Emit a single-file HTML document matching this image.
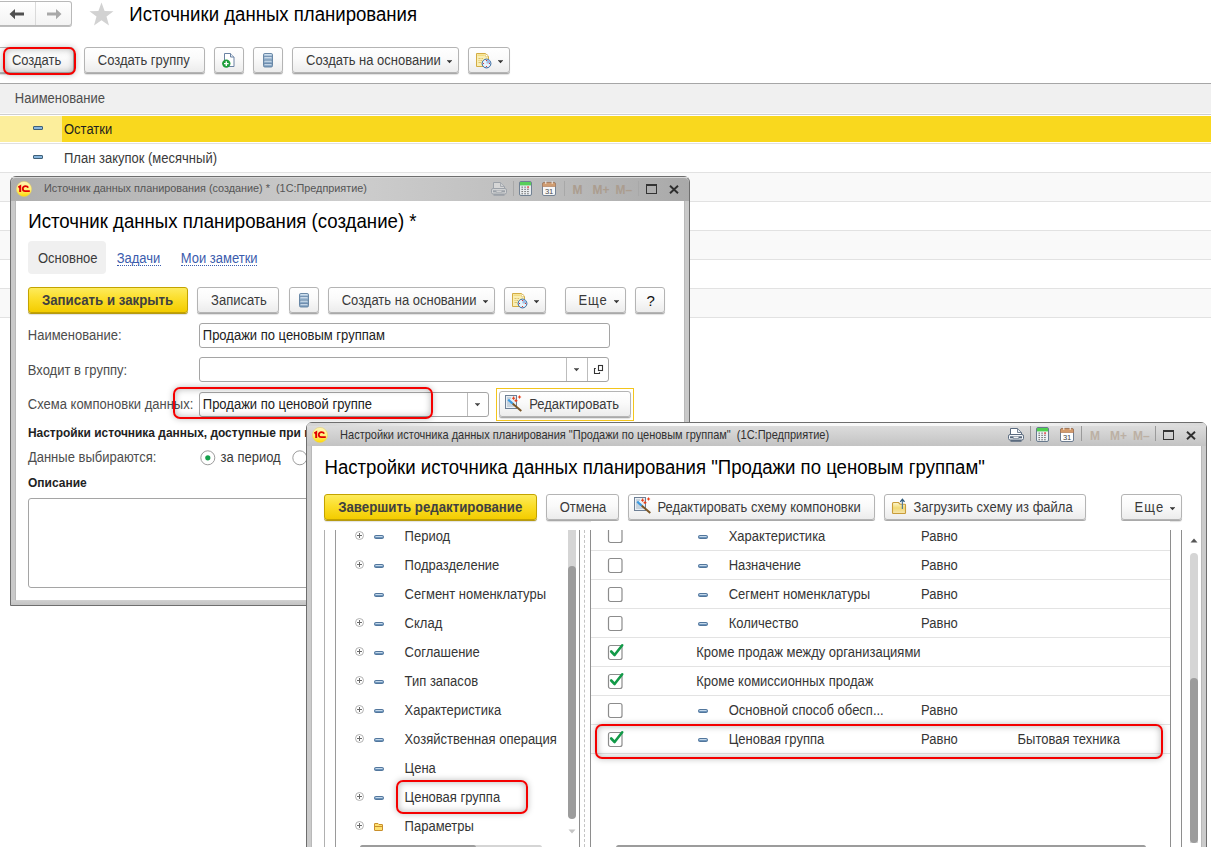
<!DOCTYPE html>
<html><head><meta charset="utf-8"><style>
*{box-sizing:border-box;margin:0;padding:0}
html,body{width:1211px;height:847px;overflow:hidden;background:#fff;font-family:"Liberation Sans",sans-serif;font-size:13px;color:#333}
.a{position:absolute}
.t{position:absolute;white-space:pre}
.btn{position:absolute;border:1px solid #b4b4b4;border-radius:3px;background:linear-gradient(#fff,#fafafa 45%,#ececec);box-shadow:0 1px 0 #a9a9a9,0 2px 1px rgba(0,0,0,.12)}
.ybtn{position:absolute;border:1px solid #c3a300;border-radius:3px;background:linear-gradient(#fdeb5c,#fbde2a 45%,#f3cc00);box-shadow:0 1px 0 #b69a10,0 2px 1px rgba(0,0,0,.12)}
.red{position:absolute;border:2px solid #f40000;border-radius:7px;box-shadow:0 0 6px rgba(0,0,0,.25),inset 0 0 7px rgba(0,0,0,.3)}
.inp{position:absolute;border:1px solid #a5a5a5;border-radius:3px;background:#fff}
</style></head><body>
<div class="a" style="left:0px;top:1px;width:72px;height:25px;border:1px solid #b9b9b9;border-left:none;border-radius:0 3px 3px 0;background:linear-gradient(#fff,#f3f3f3);box-shadow:0 1px 0 #bdbdbd"></div>
<div class="a" style="left:35px;top:2px;width:1px;height:23px;background:#dadada"></div>
<svg class="a" style="left:9px;top:9px" width="16" height="11" viewBox="0 0 16 11"><path d="M0.5 5 L6 0 L6 3.6 L15 3.6 L15 6.6 L6 6.6 L6 10.2 Z" fill="#505050"/></svg>
<svg class="a" style="left:46px;top:9px" width="16" height="11" viewBox="0 0 16 11"><path d="M15.5 5 L10 0 L10 3.6 L1 3.6 L1 6.6 L10 6.6 L10 10.2 Z" fill="#a8a8a8"/></svg>
<svg class="a" style="left:89px;top:2px" width="25" height="24" viewBox="0 0 25 24"><path d="M12.5 0.5 L15.6 9 L24.5 9.2 L17.5 14.6 L20 23.5 L12.5 18.3 L5 23.5 L7.5 14.6 L0.5 9.2 L9.4 9 Z" fill="#d2d2d2"/></svg>
<div class="t" style="left:129.28px;top:5.76px;font-size:18.6px;line-height:18.6px;color:#000;transform:scaleY(1.06);transform-origin:0 15.74px">Источники данных планирования</div>
<div class="btn" style="left:-3px;top:47px;width:77px;height:26px"></div>
<div class="t" style="left:11.90px;top:54.00px;font-size:13px;line-height:13px;color:#3a3a3a;transform:scaleY(1.08);transform-origin:0 11.00px">Создать</div>
<div class="btn" style="left:84px;top:47px;width:121px;height:26px"></div>
<div class="t" style="left:97.80px;top:54.00px;font-size:13px;line-height:13px;color:#3a3a3a;transform:scaleY(1.08);transform-origin:0 11.00px">Создать группу</div>
<div class="btn" style="left:214px;top:47px;width:30px;height:26px"></div>
<svg class="a" style="left:222px;top:53px" width="14" height="15" viewBox="0 0 14 15"><path d="M2.5 0.5 H8.5 L12 4 V13.5 H2.5 Z" fill="#fff" stroke="#6a82a2"/><path d="M8.5 0.5 V4 H12" fill="#e6ecf3" stroke="#6a82a2"/><circle cx="4.3" cy="10.6" r="4.2" fill="#1e9e3a"/><path d="M4.3 8.3 V12.9 M2 10.6 H6.6" stroke="#fff" stroke-width="1.4"/></svg>
<div class="btn" style="left:253px;top:47px;width:30px;height:26px"></div>
<svg class="a" style="left:263px;top:53px" width="10" height="15" viewBox="0 0 10 15"><defs><linearGradient id="lgl" x1="0" x2="0" y1="0" y2="1"><stop offset="0" stop-color="#a8c2da"/><stop offset="1" stop-color="#7d9dbd"/></linearGradient></defs><rect x="0.5" y="0.5" width="9" height="13.5" rx="1.3" fill="url(#lgl)" stroke="#5f7f9f" stroke-width="0.9"/><path d="M1.5 1.7 H8.5" stroke="#e0ecf6" stroke-width="0.9"/><path d="M0.8 3.75 H9.2" stroke="#5f7f9f" stroke-width="0.8"/><path d="M1.5 4.7 H8.5" stroke="#e0ecf6" stroke-width="0.9"/><path d="M0.8 7.25 H9.2" stroke="#5f7f9f" stroke-width="0.8"/><path d="M1.5 8.2 H8.5" stroke="#e0ecf6" stroke-width="0.9"/><path d="M0.8 10.75 H9.2" stroke="#5f7f9f" stroke-width="0.8"/><path d="M1.5 11.7 H8.5" stroke="#e0ecf6" stroke-width="0.9"/></svg>
<div class="btn" style="left:292px;top:47px;width:167px;height:26px"></div>
<div class="t" style="left:306.00px;top:54.00px;font-size:13px;line-height:13px;color:#3a3a3a;transform:scaleY(1.08);transform-origin:0 11.00px">Создать на основании</div>
<svg class="a" style="left:447px;top:60px" width="5" height="4" viewBox="0 0 5 4"><path d="M-0.1 0.3 H5.1 L2.5 3.3 Z" fill="#333"/></svg>
<div class="btn" style="left:468px;top:47px;width:42px;height:26px"></div>
<svg class="a" style="left:476px;top:53px" width="16" height="16" viewBox="0 0 16 16"><path d="M0.5 0.5 H9.5 L12.5 3.5 V13.5 H0.5 Z" fill="#f9eeb4" stroke="#d3ac44"/><rect x="1.5" y="1.5" width="7" height="1.5" fill="#f3dc80"/><circle cx="10.6" cy="2.6" r="1.2" fill="#fff" stroke="#d3ac44" stroke-width="0.6"/><path d="M2.5 5.5 H4.5 M5.5 5.5 H7 M2.5 7.5 H3.5 M4.5 7.5 H6 M2.5 9.5 H5" stroke="#d9bc62" stroke-width="0.9"/><circle cx="10.5" cy="10.5" r="4.4" fill="#e6f4fc" stroke="#2f649c" stroke-width="1"/><path d="M10.5 10.5 V6.6 A3.9 3.9 0 0 1 14.4 10.5 Z" fill="#9cbde4"/><circle cx="10.5" cy="7.5" r="0.6" fill="#e01818"/><circle cx="10.5" cy="13.5" r="0.6" fill="#e01818"/><circle cx="7.5" cy="10.5" r="0.6" fill="#e01818"/><circle cx="13.5" cy="10.5" r="0.6" fill="#e01818"/></svg>
<svg class="a" style="left:498px;top:60px" width="5" height="4" viewBox="0 0 5 4"><path d="M-0.1 0.3 H5.1 L2.5 3.3 Z" fill="#333"/></svg>
<div class="a" style="left:0px;top:83px;width:1211px;height:1px;background:#a6a6a6"></div>
<div class="a" style="left:0px;top:84px;width:1211px;height:30px;background:#f0f0f0"></div>
<div class="a" style="left:0px;top:113px;width:1211px;height:1px;background:#fafafa"></div>
<div class="a" style="left:0px;top:114px;width:1211px;height:1px;background:#cfcfcf"></div>
<div class="t" style="left:14.80px;top:92.00px;font-size:13px;line-height:13px;color:#4d4d4d;transform:scaleY(1.08);transform-origin:0 11.00px">Наименование</div>
<div class="a" style="left:0px;top:116px;width:62px;height:26px;background:#fcee9c"></div>
<div class="a" style="left:62px;top:116px;width:1149px;height:26px;background:#f9d81e"></div>
<div class="a" style="left:0px;top:142px;width:1211px;height:1px;background:#fff"></div>
<div class="a" style="left:0px;top:143px;width:1211px;height:1px;background:#e0e0e0"></div>
<svg class="a" style="left:33px;top:126px" width="10" height="4" viewBox="0 0 10 4"><rect x="0.5" y="0.5" width="9" height="3" rx="0.4" fill="#88b6de" stroke="#3f6078"/></svg>
<div class="t" style="left:64.00px;top:123.00px;font-size:13px;line-height:13px;color:#1f1f1f;transform:scaleY(1.08);transform-origin:0 11.00px">Остатки</div>
<svg class="a" style="left:33px;top:155px" width="10" height="4" viewBox="0 0 10 4"><rect x="0.5" y="0.5" width="9" height="3" rx="0.4" fill="#88b6de" stroke="#3f6078"/></svg>
<div class="t" style="left:64.00px;top:152.00px;font-size:13px;line-height:13px;color:#3a3a3a;transform:scaleY(1.08);transform-origin:0 11.00px">План закупок (месячный)</div>
<div class="a" style="left:0px;top:172px;width:1211px;height:1px;background:#e2e2e2"></div>
<div class="a" style="left:0px;top:173px;width:1211px;height:28px;background:#f9f9f9"></div>
<div class="a" style="left:0px;top:201px;width:1211px;height:1px;background:#e2e2e2"></div>
<div class="a" style="left:0px;top:202px;width:1211px;height:28px;background:#fff"></div>
<div class="a" style="left:0px;top:230px;width:1211px;height:1px;background:#e2e2e2"></div>
<div class="a" style="left:0px;top:231px;width:1211px;height:28px;background:#f9f9f9"></div>
<div class="a" style="left:0px;top:259px;width:1211px;height:1px;background:#e2e2e2"></div>
<div class="a" style="left:0px;top:260px;width:1211px;height:28px;background:#fff"></div>
<div class="a" style="left:0px;top:288px;width:1211px;height:1px;background:#e2e2e2"></div>
<div class="a" style="left:0px;top:289px;width:1211px;height:28px;background:#f9f9f9"></div>
<div class="a" style="left:0px;top:317px;width:1211px;height:1px;background:#e2e2e2"></div>
<div class="red" style="left:3px;top:47px;width:73px;height:28px"></div>
<div class="a" style="left:10px;top:176px;width:680px;height:430px;border:1px solid #6e6e6e;border-radius:6px 6px 0 0;background:#c9c9c9"></div>
<div class="a" style="left:11px;top:177px;width:678px;height:1px;background:#d8d8d8;border-radius:6px 6px 0 0"></div>
<div class="a" style="left:11px;top:178px;width:678px;height:23px;background:linear-gradient(to right,#aeaeae 0%,#bdbdbd 25%,#cdcdcd 50%,#bdbdbd 78%,#a9a9a9 100%);border-radius:5px 5px 0 0"></div>
<div class="a" style="left:11px;top:600px;width:678px;height:5px;background:linear-gradient(#cfcfcf,#c4c4c4)"></div>
<div class="a" style="left:15px;top:201px;width:670px;height:400px;background:#fff;border-left:1px solid #b9b9b9;border-right:1px solid #b9b9b9;border-bottom:1px solid #d0d0d0"></div>
<svg class="a" style="left:16px;top:181px" width="16" height="16" viewBox="0 0 16 16"><defs><linearGradient id="lg24" x1="0" x2="0" y1="0" y2="1"><stop offset="0" stop-color="#fff7b8"/><stop offset="0.55" stop-color="#fff07a"/><stop offset="1" stop-color="#ffd800"/></linearGradient></defs><circle cx="8" cy="8" r="7.6" fill="url(#lg24)" stroke="#e8cf60" stroke-width="0.5"/><path d="M2.4 6.3 L4.2 5.2 V10.9" fill="none" stroke="#e00000" stroke-width="2"/><path d="M12.2 6.6 C11.7 5.6 10.7 5.1 9.5 5.1 C7.9 5.1 6.8 6.3 6.8 7.7 C6.8 9.2 7.8 10.1 9.2 10.1 H13.8" fill="none" stroke="#e00000" stroke-width="1.8"/></svg>
<div class="t" style="left:44.08px;top:183.42px;font-size:10.85px;line-height:10.85px;color:#555;transform:scaleY(1.08);transform-origin:0 9.18px">Источник данных планирования (создание) *  (1С:Предприятие)</div>
<svg class="a" style="left:491px;top:182px;opacity:0.35" width="16" height="14" viewBox="0 0 16 14"><path d="M2.5 0.5 H9.5 L13.5 4.5 V6.5 H2.5 Z" fill="#fff" stroke="#5a6a7e"/><path d="M9.5 0.8 V4.5 H13.2" fill="#e6ebf0" stroke="#5a6a7e" stroke-width="0.8"/><rect x="0.5" y="6.5" width="15" height="5.5" rx="1.6" fill="#f3f5f8" stroke="#5a6a7e"/><rect x="2" y="8.3" width="3.2" height="2" fill="#56677b"/><rect x="10.8" y="8.3" width="3.2" height="2" fill="#56677b"/><rect x="5.2" y="8.8" width="5.6" height="1.6" fill="#fff" stroke="#56677b" stroke-width="0.6"/><rect x="2.5" y="12" width="11" height="1.8" fill="#5a6a7e"/></svg>
<div class="a" style="left:513px;top:181px;width:1px;height:15px;background:#a8a8a8"></div>
<svg class="a" style="left:519px;top:181px;opacity:0.9" width="13" height="15" viewBox="0 0 13 15"><rect x="0.5" y="0.5" width="12" height="14" rx="1.5" fill="#eef2f5" stroke="#687a8e"/><rect x="1" y="1" width="11" height="3.4" fill="#4fd04f"/><rect x="2.6" y="5.6" width="1.1" height="1.1" fill="#3a3a3a"/><rect x="2.6" y="7.8" width="1.1" height="1.1" fill="#3a3a3a"/><rect x="2.6" y="10.0" width="1.1" height="1.1" fill="#3a3a3a"/><rect x="2.6" y="12.2" width="1.1" height="1.1" fill="#3a3a3a"/><rect x="5.5" y="5.6" width="1.1" height="1.1" fill="#3a3a3a"/><rect x="5.5" y="7.8" width="1.1" height="1.1" fill="#3a3a3a"/><rect x="5.5" y="10.0" width="1.1" height="1.1" fill="#3a3a3a"/><rect x="5.5" y="12.2" width="1.1" height="1.1" fill="#3a3a3a"/><rect x="8.4" y="7.8" width="1.1" height="1.1" fill="#3a3a3a"/><rect x="8.4" y="10.0" width="1.1" height="1.1" fill="#3a3a3a"/><rect x="8.4" y="12.2" width="1.1" height="1.1" fill="#3a3a3a"/><rect x="8.4" y="5.2" width="1.3" height="2" fill="#e82020"/></svg>
<svg class="a" style="left:542px;top:181px;opacity:0.9" width="14" height="15" viewBox="0 0 14 15"><rect x="0.5" y="1.5" width="13" height="13" rx="1.5" fill="#fff" stroke="#6d7d90"/><path d="M0.5 5.5 V3 A1.5 1.5 0 0 1 2 1.5 H12 A1.5 1.5 0 0 1 13.5 3 V5.5 Z" fill="#d39a6a" stroke="#a87048" stroke-width="0.6"/><rect x="3.3" y="0.3" width="1" height="2.5" fill="#fff"/><rect x="9.7" y="0.3" width="1" height="2.5" fill="#fff"/><text x="7" y="12.8" font-family="Liberation Sans" font-size="7.6" text-anchor="middle" fill="#404040" letter-spacing="-0.2">31</text></svg>
<div class="a" style="left:564px;top:181px;width:1px;height:15px;background:#a8a8a8"></div>
<div class="t" style="left:572.5px;top:183.6px;font-size:12px;line-height:12px;font-weight:bold;color:#ab9d8f">M</div>
<div class="t" style="left:592.5px;top:183.6px;font-size:12px;line-height:12px;font-weight:bold;color:#ab9d8f">M+</div>
<div class="t" style="left:615.5px;top:183.6px;font-size:12px;line-height:12px;font-weight:bold;color:#ab9d8f">M&#8211;</div>
<div class="a" style="left:638px;top:181px;width:1px;height:15px;background:#a8a8a8"></div>
<div class="a" style="left:646px;top:184px;width:11px;height:10px;border:1px solid #333;border-top-width:2px"></div>
<svg class="a" style="left:668.5px;top:184.5px" width="10" height="9" viewBox="0 0 10 9"><path d="M1 0.8 L9 8.2 M9 0.8 L1 8.2" stroke="#2e2e2e" stroke-width="1.9"/></svg>
<div class="t" style="left:28.28px;top:212.71px;font-size:18.65px;line-height:18.65px;color:#000;transform:scaleY(1.06);transform-origin:0 15.79px">Источник данных планирования (создание) *</div>
<div class="a" style="left:28px;top:241px;width:78px;height:33px;background:#f0f0f0;border-radius:4px"></div>
<div class="t" style="left:38.00px;top:252.20px;font-size:13px;line-height:13px;color:#3a3a3a;transform:scaleY(1.08);transform-origin:0 11.00px">Основное</div>
<div class="t" style="left:116.70px;top:252.20px;font-size:13px;line-height:13px;color:#3b5cad;transform:scaleY(1.08);transform-origin:0 11.00px">Задачи</div>
<div class="a" style="left:117px;top:265px;width:44px;height:1px;border-bottom:1px dotted #3b5cad"></div>
<div class="t" style="left:180.70px;top:252.20px;font-size:13px;line-height:13px;color:#3b5cad;transform:scaleY(1.08);transform-origin:0 11.00px">Мои заметки</div>
<div class="a" style="left:181px;top:265px;width:76px;height:1px;border-bottom:1px dotted #3b5cad"></div>
<div class="ybtn" style="left:28px;top:287px;width:160px;height:26px"></div>
<div class="t" style="left:41.89px;top:293.98px;font-size:13.25px;line-height:13.25px;color:#404040;font-weight:bold;transform:scaleY(1.08);transform-origin:0 11.22px">Записать и закрыть</div>
<div class="btn" style="left:197px;top:287px;width:82px;height:26px"></div>
<div class="t" style="left:211.10px;top:294.20px;font-size:13px;line-height:13px;color:#3a3a3a;transform:scaleY(1.08);transform-origin:0 11.00px">Записать</div>
<div class="btn" style="left:289px;top:287px;width:30px;height:26px"></div>
<svg class="a" style="left:299px;top:293px" width="10" height="15" viewBox="0 0 10 15"><defs><linearGradient id="lgl" x1="0" x2="0" y1="0" y2="1"><stop offset="0" stop-color="#a8c2da"/><stop offset="1" stop-color="#7d9dbd"/></linearGradient></defs><rect x="0.5" y="0.5" width="9" height="13.5" rx="1.3" fill="url(#lgl)" stroke="#5f7f9f" stroke-width="0.9"/><path d="M1.5 1.7 H8.5" stroke="#e0ecf6" stroke-width="0.9"/><path d="M0.8 3.75 H9.2" stroke="#5f7f9f" stroke-width="0.8"/><path d="M1.5 4.7 H8.5" stroke="#e0ecf6" stroke-width="0.9"/><path d="M0.8 7.25 H9.2" stroke="#5f7f9f" stroke-width="0.8"/><path d="M1.5 8.2 H8.5" stroke="#e0ecf6" stroke-width="0.9"/><path d="M0.8 10.75 H9.2" stroke="#5f7f9f" stroke-width="0.8"/><path d="M1.5 11.7 H8.5" stroke="#e0ecf6" stroke-width="0.9"/></svg>
<div class="btn" style="left:328px;top:287px;width:167px;height:26px"></div>
<div class="t" style="left:341.70px;top:294.20px;font-size:13px;line-height:13px;color:#3a3a3a;transform:scaleY(1.08);transform-origin:0 11.00px">Создать на основании</div>
<svg class="a" style="left:483px;top:300px" width="5" height="4" viewBox="0 0 5 4"><path d="M-0.1 0.3 H5.1 L2.5 3.3 Z" fill="#333"/></svg>
<div class="btn" style="left:504px;top:287px;width:42px;height:26px"></div>
<svg class="a" style="left:512px;top:293px" width="16" height="16" viewBox="0 0 16 16"><path d="M0.5 0.5 H9.5 L12.5 3.5 V13.5 H0.5 Z" fill="#f9eeb4" stroke="#d3ac44"/><rect x="1.5" y="1.5" width="7" height="1.5" fill="#f3dc80"/><circle cx="10.6" cy="2.6" r="1.2" fill="#fff" stroke="#d3ac44" stroke-width="0.6"/><path d="M2.5 5.5 H4.5 M5.5 5.5 H7 M2.5 7.5 H3.5 M4.5 7.5 H6 M2.5 9.5 H5" stroke="#d9bc62" stroke-width="0.9"/><circle cx="10.5" cy="10.5" r="4.4" fill="#e6f4fc" stroke="#2f649c" stroke-width="1"/><path d="M10.5 10.5 V6.6 A3.9 3.9 0 0 1 14.4 10.5 Z" fill="#9cbde4"/><circle cx="10.5" cy="7.5" r="0.6" fill="#e01818"/><circle cx="10.5" cy="13.5" r="0.6" fill="#e01818"/><circle cx="7.5" cy="10.5" r="0.6" fill="#e01818"/><circle cx="13.5" cy="10.5" r="0.6" fill="#e01818"/></svg>
<svg class="a" style="left:534px;top:300px" width="5" height="4" viewBox="0 0 5 4"><path d="M-0.1 0.3 H5.1 L2.5 3.3 Z" fill="#333"/></svg>
<div class="btn" style="left:565px;top:287px;width:61px;height:26px"></div>
<div class="t" style="left:578.50px;top:294.20px;font-size:13px;line-height:13px;color:#3a3a3a;letter-spacing:0.9px;transform:scaleY(1.08);transform-origin:0 11.00px">Еще</div>
<svg class="a" style="left:614px;top:300px" width="5" height="4" viewBox="0 0 5 4"><path d="M-0.1 0.3 H5.1 L2.5 3.3 Z" fill="#333"/></svg>
<div class="btn" style="left:635px;top:287px;width:30px;height:26px"></div>
<div class="t" style="left:646.42px;top:293.10px;font-size:15px;line-height:15px;color:#111;transform:none">?</div>
<div class="t" style="left:27.80px;top:329.20px;font-size:13px;line-height:13px;color:#4d4d4d;transform:scaleY(1.08);transform-origin:0 11.00px">Наименование:</div>
<div class="inp" style="left:199px;top:323px;width:411px;height:25px"></div>
<div class="t" style="left:202.80px;top:329.20px;font-size:13px;line-height:13px;color:#222;transform:scaleY(1.08);transform-origin:0 11.00px">Продажи по ценовым группам</div>
<div class="t" style="left:27.80px;top:363.50px;font-size:13px;line-height:13px;color:#4d4d4d;transform:scaleY(1.08);transform-origin:0 11.00px">Входит в группу:</div>
<div class="inp" style="left:199px;top:357px;width:410px;height:25px"></div>
<div class="a" style="left:566px;top:358px;width:1px;height:23px;background:#bdbdbd"></div>
<div class="a" style="left:587px;top:358px;width:1px;height:23px;background:#bdbdbd"></div>
<svg class="a" style="left:574px;top:368px" width="5" height="4" viewBox="0 0 5 4"><path d="M-0.1 0.3 H5.1 L2.5 3.3 Z" fill="#444"/></svg>
<svg class="a" style="left:593px;top:364px" width="11" height="11" viewBox="0 0 11 11"><rect x="5.5" y="1.5" width="4" height="5" fill="#fff" stroke="#333" stroke-width="1.1"/><path d="M2.8 4.5 H1.5 V9.5 H6.5 V8.2" fill="none" stroke="#333" stroke-width="1.1"/></svg>
<div class="t" style="left:27.80px;top:398.10px;font-size:13px;line-height:13px;color:#4d4d4d;transform:scaleY(1.08);transform-origin:0 11.00px">Схема компоновки данных:</div>
<div class="inp" style="left:199px;top:392px;width:290px;height:25px"></div>
<div class="a" style="left:467px;top:393px;width:1px;height:23px;background:#bdbdbd"></div>
<svg class="a" style="left:475px;top:403px" width="5" height="4" viewBox="0 0 5 4"><path d="M-0.1 0.3 H5.1 L2.5 3.3 Z" fill="#444"/></svg>
<div class="t" style="left:202.80px;top:398.10px;font-size:13px;line-height:13px;color:#222;transform:scaleY(1.08);transform-origin:0 11.00px">Продажи по ценовой группе</div>
<div class="a" style="left:496px;top:388px;width:138px;height:33px;border:1px solid #f3c51c"></div>
<div class="btn" style="left:499px;top:391px;width:132px;height:26px"></div>
<svg class="a" style="left:505px;top:395px" width="18" height="17" viewBox="0 0 18 17"><rect x="0.5" y="0.5" width="11" height="13" fill="#eaf0f5" stroke="#6d7f95"/><path d="M2 3 H6 M2 5 H5 M2 7 H7 M2 9 H6 M2 11 H9" stroke="#93a6ba" stroke-width="0.8"/><path d="M7.2 8.2 L16.3 16" stroke="#7a5626" stroke-width="2"/><path d="M3.2 4.6 L7.6 8.6" stroke="#3d9be2" stroke-width="2.1"/><path d="M8.6 1.6 V4.8 M7 3.2 H10.2 M14.5 0.4 V3.6 M12.9 2 H16.1 M11 4.2 V7 M9.6 5.6 H12.4" stroke="#e8401a" stroke-width="1.1"/></svg>
<div class="t" style="left:529.20px;top:397.60px;font-size:13px;line-height:13px;color:#3a3a3a;transform:scaleY(1.08);transform-origin:0 11.00px">Редактировать</div>
<div class="t" style="left:27.94px;top:428.48px;font-size:11.95px;line-height:11.95px;color:#222;font-weight:bold">Настройки источника данных, доступные при и</div>
<div class="t" style="left:27.90px;top:451.30px;font-size:13px;line-height:13px;color:#4d4d4d;transform:scaleY(1.08);transform-origin:0 11.00px">Данные выбираются:</div>
<svg class="a" style="left:199.5px;top:450px" width="16" height="16" viewBox="0 0 16 16"><circle cx="7.8" cy="7.8" r="7" fill="#fff" stroke="#9c9c9c" stroke-width="1"/><circle cx="7.8" cy="7.8" r="2.6" fill="#16a04c"/></svg>
<div class="t" style="left:220.60px;top:450.80px;font-size:13px;line-height:13px;color:#3a3a3a;transform:scaleY(1.08);transform-origin:0 11.00px">за период</div>
<svg class="a" style="left:291.5px;top:450px" width="16" height="16" viewBox="0 0 16 16"><circle cx="7.8" cy="7.8" r="7" fill="#fff" stroke="#9c9c9c" stroke-width="1"/></svg>
<div class="t" style="left:27.94px;top:477.24px;font-size:12px;line-height:12px;color:#222;font-weight:bold">Описание</div>
<div class="inp" style="left:28px;top:498px;width:600px;height:90px"></div>
<div class="red" style="left:173px;top:387px;width:260px;height:32px"></div>
<div class="a" style="left:306px;top:422px;width:901px;height:440px;border:1px solid #6e6e6e;border-radius:6px 6px 0 0;background:#cbcbcb"></div>
<div class="a" style="left:307px;top:423px;width:899px;height:3px;background:linear-gradient(to right,#d4d4d4 0%,#eeeeee 15%,#fafafa 40%,#f8f8f8 75%,#d8d8d8 100%);border-radius:5px 5px 0 0"></div>
<div class="a" style="left:307px;top:426px;width:899px;height:20px;background:linear-gradient(#dcdcdc,#c3c3c3)"></div>
<div class="a" style="left:311px;top:446px;width:891px;height:420px;background:#fff;border-left:1px solid #b9b9b9;border-right:1px solid #b9b9b9"></div>
<svg class="a" style="left:312px;top:427px" width="16" height="16" viewBox="0 0 16 16"><defs><linearGradient id="lg320" x1="0" x2="0" y1="0" y2="1"><stop offset="0" stop-color="#fff7b8"/><stop offset="0.55" stop-color="#fff07a"/><stop offset="1" stop-color="#ffd800"/></linearGradient></defs><circle cx="8" cy="8" r="7.6" fill="url(#lg320)" stroke="#e8cf60" stroke-width="0.5"/><path d="M2.4 6.3 L4.2 5.2 V10.9" fill="none" stroke="#e00000" stroke-width="2"/><path d="M12.2 6.6 C11.7 5.6 10.7 5.1 9.5 5.1 C7.9 5.1 6.8 6.3 6.8 7.7 C6.8 9.2 7.8 10.1 9.2 10.1 H13.8" fill="none" stroke="#e00000" stroke-width="1.8"/></svg>
<div class="t" style="left:340.08px;top:429.99px;font-size:11px;line-height:11px;color:#303030;transform:scaleY(1.08);transform-origin:0 9.31px">Настройки источника данных планирования "Продажи по ценовым группам"  (1С:Предприятие)</div>
<svg class="a" style="left:1008px;top:428px;opacity:1" width="16" height="14" viewBox="0 0 16 14"><path d="M2.5 0.5 H9.5 L13.5 4.5 V6.5 H2.5 Z" fill="#fff" stroke="#5a6a7e"/><path d="M9.5 0.8 V4.5 H13.2" fill="#e6ebf0" stroke="#5a6a7e" stroke-width="0.8"/><rect x="0.5" y="6.5" width="15" height="5.5" rx="1.6" fill="#f3f5f8" stroke="#5a6a7e"/><rect x="2" y="8.3" width="3.2" height="2" fill="#56677b"/><rect x="10.8" y="8.3" width="3.2" height="2" fill="#56677b"/><rect x="5.2" y="8.8" width="5.6" height="1.6" fill="#fff" stroke="#56677b" stroke-width="0.6"/><rect x="2.5" y="12" width="11" height="1.8" fill="#5a6a7e"/></svg>
<div class="a" style="left:1030px;top:426px;width:1px;height:15px;background:#9a9a9a"></div>
<svg class="a" style="left:1036px;top:427px;opacity:1" width="13" height="15" viewBox="0 0 13 15"><rect x="0.5" y="0.5" width="12" height="14" rx="1.5" fill="#eef2f5" stroke="#687a8e"/><rect x="1" y="1" width="11" height="3.4" fill="#4fd04f"/><rect x="2.6" y="5.6" width="1.1" height="1.1" fill="#3a3a3a"/><rect x="2.6" y="7.8" width="1.1" height="1.1" fill="#3a3a3a"/><rect x="2.6" y="10.0" width="1.1" height="1.1" fill="#3a3a3a"/><rect x="2.6" y="12.2" width="1.1" height="1.1" fill="#3a3a3a"/><rect x="5.5" y="5.6" width="1.1" height="1.1" fill="#3a3a3a"/><rect x="5.5" y="7.8" width="1.1" height="1.1" fill="#3a3a3a"/><rect x="5.5" y="10.0" width="1.1" height="1.1" fill="#3a3a3a"/><rect x="5.5" y="12.2" width="1.1" height="1.1" fill="#3a3a3a"/><rect x="8.4" y="7.8" width="1.1" height="1.1" fill="#3a3a3a"/><rect x="8.4" y="10.0" width="1.1" height="1.1" fill="#3a3a3a"/><rect x="8.4" y="12.2" width="1.1" height="1.1" fill="#3a3a3a"/><rect x="8.4" y="5.2" width="1.3" height="2" fill="#e82020"/></svg>
<svg class="a" style="left:1060px;top:427px;opacity:1" width="14" height="15" viewBox="0 0 14 15"><rect x="0.5" y="1.5" width="13" height="13" rx="1.5" fill="#fff" stroke="#6d7d90"/><path d="M0.5 5.5 V3 A1.5 1.5 0 0 1 2 1.5 H12 A1.5 1.5 0 0 1 13.5 3 V5.5 Z" fill="#d39a6a" stroke="#a87048" stroke-width="0.6"/><rect x="3.3" y="0.3" width="1" height="2.5" fill="#fff"/><rect x="9.7" y="0.3" width="1" height="2.5" fill="#fff"/><text x="7" y="12.8" font-family="Liberation Sans" font-size="7.6" text-anchor="middle" fill="#404040" letter-spacing="-0.2">31</text></svg>
<div class="a" style="left:1081px;top:426px;width:1px;height:15px;background:#9a9a9a"></div>
<div class="t" style="left:1090px;top:429.6px;font-size:12px;line-height:12px;font-weight:bold;color:#bcb0a4">M</div>
<div class="t" style="left:1110px;top:429.6px;font-size:12px;line-height:12px;font-weight:bold;color:#bcb0a4">M+</div>
<div class="t" style="left:1133px;top:429.6px;font-size:12px;line-height:12px;font-weight:bold;color:#bcb0a4">M&#8211;</div>
<div class="a" style="left:1155px;top:426px;width:1px;height:15px;background:#9a9a9a"></div>
<div class="a" style="left:1163px;top:430px;width:11px;height:10px;border:1px solid #333;border-top-width:2px"></div>
<svg class="a" style="left:1186px;top:430.5px" width="10" height="9" viewBox="0 0 10 9"><path d="M1 0.8 L9 8.2 M9 0.8 L1 8.2" stroke="#2e2e2e" stroke-width="1.9"/></svg>
<div class="t" style="left:324.48px;top:459.06px;font-size:18.6px;line-height:18.6px;color:#000;transform:scaleY(1.06);transform-origin:0 15.74px">Настройки источника данных планирования "Продажи по ценовым группам"</div>
<div class="ybtn" style="left:324px;top:494px;width:213px;height:26px"></div>
<div class="t" style="left:338.19px;top:500.98px;font-size:13.25px;line-height:13.25px;color:#404040;font-weight:bold;transform:scaleY(1.08);transform-origin:0 11.22px">Завершить редактирование</div>
<div class="btn" style="left:546px;top:494px;width:73px;height:26px"></div>
<div class="t" style="left:559.70px;top:501.00px;font-size:13px;line-height:13px;color:#3a3a3a;transform:scaleY(1.08);transform-origin:0 11.00px">Отмена</div>
<div class="btn" style="left:628px;top:494px;width:247px;height:26px"></div>
<svg class="a" style="left:634px;top:497px" width="18" height="17" viewBox="0 0 18 17"><rect x="0.5" y="0.5" width="11" height="13" fill="#eaf0f5" stroke="#6d7f95"/><path d="M2 3 H6 M2 5 H5 M2 7 H7 M2 9 H6 M2 11 H9" stroke="#93a6ba" stroke-width="0.8"/><path d="M7.2 8.2 L16.3 16" stroke="#7a5626" stroke-width="2"/><path d="M3.2 4.6 L7.6 8.6" stroke="#3d9be2" stroke-width="2.1"/><path d="M8.6 1.6 V4.8 M7 3.2 H10.2 M14.5 0.4 V3.6 M12.9 2 H16.1 M11 4.2 V7 M9.6 5.6 H12.4" stroke="#e8401a" stroke-width="1.1"/></svg>
<div class="t" style="left:657.50px;top:501.00px;font-size:13px;line-height:13px;color:#3a3a3a;transform:scaleY(1.08);transform-origin:0 11.00px">Редактировать схему компоновки</div>
<div class="btn" style="left:884px;top:494px;width:202px;height:26px"></div>
<svg class="a" style="left:891px;top:498px" width="16" height="17" viewBox="0 0 16 17"><defs><linearGradient id="lgf" x1="0" x2="0" y1="0" y2="1"><stop offset="0" stop-color="#fdf8d0"/><stop offset="0.5" stop-color="#f1d974"/><stop offset="1" stop-color="#f6e6b0"/></linearGradient></defs><path d="M1.5 5.5 C1.5 4.8 1.8 4.5 2.5 4.5 H7.5 L9.2 6.2 H13.8 C14.3 6.2 14.5 6.5 14.5 7 V14.8 C14.5 15.3 14.3 15.5 13.8 15.5 H2.2 C1.7 15.5 1.5 15.3 1.5 14.8 Z" fill="url(#lgf)" stroke="#c89c3a" stroke-width="1.1"/><path d="M11.4 2 V11" stroke="#557c96" stroke-width="1.2"/><path d="M9.3 3.8 L11.4 1.3 L13.5 3.8" fill="none" stroke="#2d5878" stroke-width="1.3"/></svg>
<div class="t" style="left:913.60px;top:501.00px;font-size:13px;line-height:13px;color:#3a3a3a;transform:scaleY(1.08);transform-origin:0 11.00px">Загрузить схему из файла</div>
<div class="btn" style="left:1121px;top:494px;width:61px;height:26px"></div>
<div class="t" style="left:1134.40px;top:501.00px;font-size:13px;line-height:13px;color:#3a3a3a;letter-spacing:1.2px;transform:scaleY(1.08);transform-origin:0 11.00px">Еще</div>
<svg class="a" style="left:1170px;top:507px" width="5" height="4" viewBox="0 0 5 4"><path d="M-0.1 0.3 H5.1 L2.5 3.3 Z" fill="#333"/></svg>
<div class="a" style="left:324px;top:530px;width:1px;height:317px;background:#b0b0b0"></div>
<div class="a" style="left:335px;top:530px;width:1px;height:317px;background:#9a9a9a"></div>
<svg class="a" style="left:354px;top:530px" width="11" height="11" viewBox="0 0 11 11"><circle cx="5.5" cy="5.5" r="4" fill="#fff" stroke="#b2b2b2" stroke-width="1"/><path d="M3 5.5 H8 M5.5 3 V8" stroke="#6a6a6a" stroke-width="1"/></svg>
<svg class="a" style="left:374px;top:535px" width="10" height="4" viewBox="0 0 10 4"><rect x="0.5" y="0.5" width="9" height="3" rx="1.1" fill="#6d94ba" stroke="#52769c"/><path d="M1.5 1.5 H8.5" stroke="#c4d8ea" stroke-width="1"/></svg>
<div class="t" style="left:404.60px;top:529.80px;font-size:13px;line-height:13px;color:#353535;transform:scaleY(1.08);transform-origin:0 11.00px">Период</div>
<svg class="a" style="left:354px;top:559px" width="11" height="11" viewBox="0 0 11 11"><circle cx="5.5" cy="5.5" r="4" fill="#fff" stroke="#b2b2b2" stroke-width="1"/><path d="M3 5.5 H8 M5.5 3 V8" stroke="#6a6a6a" stroke-width="1"/></svg>
<svg class="a" style="left:374px;top:564px" width="10" height="4" viewBox="0 0 10 4"><rect x="0.5" y="0.5" width="9" height="3" rx="1.1" fill="#6d94ba" stroke="#52769c"/><path d="M1.5 1.5 H8.5" stroke="#c4d8ea" stroke-width="1"/></svg>
<div class="t" style="left:404.60px;top:558.80px;font-size:13px;line-height:13px;color:#353535;transform:scaleY(1.08);transform-origin:0 11.00px">Подразделение</div>
<svg class="a" style="left:374px;top:593px" width="10" height="4" viewBox="0 0 10 4"><rect x="0.5" y="0.5" width="9" height="3" rx="1.1" fill="#6d94ba" stroke="#52769c"/><path d="M1.5 1.5 H8.5" stroke="#c4d8ea" stroke-width="1"/></svg>
<div class="t" style="left:404.60px;top:587.80px;font-size:13px;line-height:13px;color:#353535;transform:scaleY(1.08);transform-origin:0 11.00px">Сегмент номенклатуры</div>
<svg class="a" style="left:354px;top:617px" width="11" height="11" viewBox="0 0 11 11"><circle cx="5.5" cy="5.5" r="4" fill="#fff" stroke="#b2b2b2" stroke-width="1"/><path d="M3 5.5 H8 M5.5 3 V8" stroke="#6a6a6a" stroke-width="1"/></svg>
<svg class="a" style="left:374px;top:622px" width="10" height="4" viewBox="0 0 10 4"><rect x="0.5" y="0.5" width="9" height="3" rx="1.1" fill="#6d94ba" stroke="#52769c"/><path d="M1.5 1.5 H8.5" stroke="#c4d8ea" stroke-width="1"/></svg>
<div class="t" style="left:404.60px;top:616.80px;font-size:13px;line-height:13px;color:#353535;transform:scaleY(1.08);transform-origin:0 11.00px">Склад</div>
<svg class="a" style="left:354px;top:646px" width="11" height="11" viewBox="0 0 11 11"><circle cx="5.5" cy="5.5" r="4" fill="#fff" stroke="#b2b2b2" stroke-width="1"/><path d="M3 5.5 H8 M5.5 3 V8" stroke="#6a6a6a" stroke-width="1"/></svg>
<svg class="a" style="left:374px;top:651px" width="10" height="4" viewBox="0 0 10 4"><rect x="0.5" y="0.5" width="9" height="3" rx="1.1" fill="#6d94ba" stroke="#52769c"/><path d="M1.5 1.5 H8.5" stroke="#c4d8ea" stroke-width="1"/></svg>
<div class="t" style="left:404.60px;top:645.80px;font-size:13px;line-height:13px;color:#353535;transform:scaleY(1.08);transform-origin:0 11.00px">Соглашение</div>
<svg class="a" style="left:354px;top:675px" width="11" height="11" viewBox="0 0 11 11"><circle cx="5.5" cy="5.5" r="4" fill="#fff" stroke="#b2b2b2" stroke-width="1"/><path d="M3 5.5 H8 M5.5 3 V8" stroke="#6a6a6a" stroke-width="1"/></svg>
<svg class="a" style="left:374px;top:680px" width="10" height="4" viewBox="0 0 10 4"><rect x="0.5" y="0.5" width="9" height="3" rx="1.1" fill="#6d94ba" stroke="#52769c"/><path d="M1.5 1.5 H8.5" stroke="#c4d8ea" stroke-width="1"/></svg>
<div class="t" style="left:404.60px;top:674.80px;font-size:13px;line-height:13px;color:#353535;transform:scaleY(1.08);transform-origin:0 11.00px">Тип запасов</div>
<svg class="a" style="left:354px;top:704px" width="11" height="11" viewBox="0 0 11 11"><circle cx="5.5" cy="5.5" r="4" fill="#fff" stroke="#b2b2b2" stroke-width="1"/><path d="M3 5.5 H8 M5.5 3 V8" stroke="#6a6a6a" stroke-width="1"/></svg>
<svg class="a" style="left:374px;top:709px" width="10" height="4" viewBox="0 0 10 4"><rect x="0.5" y="0.5" width="9" height="3" rx="1.1" fill="#6d94ba" stroke="#52769c"/><path d="M1.5 1.5 H8.5" stroke="#c4d8ea" stroke-width="1"/></svg>
<div class="t" style="left:404.60px;top:703.80px;font-size:13px;line-height:13px;color:#353535;transform:scaleY(1.08);transform-origin:0 11.00px">Характеристика</div>
<svg class="a" style="left:354px;top:733px" width="11" height="11" viewBox="0 0 11 11"><circle cx="5.5" cy="5.5" r="4" fill="#fff" stroke="#b2b2b2" stroke-width="1"/><path d="M3 5.5 H8 M5.5 3 V8" stroke="#6a6a6a" stroke-width="1"/></svg>
<svg class="a" style="left:374px;top:738px" width="10" height="4" viewBox="0 0 10 4"><rect x="0.5" y="0.5" width="9" height="3" rx="1.1" fill="#6d94ba" stroke="#52769c"/><path d="M1.5 1.5 H8.5" stroke="#c4d8ea" stroke-width="1"/></svg>
<div class="t" style="left:404.60px;top:732.80px;font-size:13px;line-height:13px;color:#353535;transform:scaleY(1.08);transform-origin:0 11.00px">Хозяйственная операция</div>
<svg class="a" style="left:374px;top:767px" width="10" height="4" viewBox="0 0 10 4"><rect x="0.5" y="0.5" width="9" height="3" rx="1.1" fill="#6d94ba" stroke="#52769c"/><path d="M1.5 1.5 H8.5" stroke="#c4d8ea" stroke-width="1"/></svg>
<div class="t" style="left:404.60px;top:761.80px;font-size:13px;line-height:13px;color:#353535;transform:scaleY(1.08);transform-origin:0 11.00px">Цена</div>
<svg class="a" style="left:354px;top:791px" width="11" height="11" viewBox="0 0 11 11"><circle cx="5.5" cy="5.5" r="4" fill="#fff" stroke="#b2b2b2" stroke-width="1"/><path d="M3 5.5 H8 M5.5 3 V8" stroke="#6a6a6a" stroke-width="1"/></svg>
<svg class="a" style="left:374px;top:796px" width="10" height="4" viewBox="0 0 10 4"><rect x="0.5" y="0.5" width="9" height="3" rx="1.1" fill="#6d94ba" stroke="#52769c"/><path d="M1.5 1.5 H8.5" stroke="#c4d8ea" stroke-width="1"/></svg>
<div class="t" style="left:404.60px;top:790.80px;font-size:13px;line-height:13px;color:#353535;transform:scaleY(1.08);transform-origin:0 11.00px">Ценовая группа</div>
<svg class="a" style="left:354px;top:820px" width="11" height="11" viewBox="0 0 11 11"><circle cx="5.5" cy="5.5" r="4" fill="#fff" stroke="#b2b2b2" stroke-width="1"/><path d="M3 5.5 H8 M5.5 3 V8" stroke="#6a6a6a" stroke-width="1"/></svg>
<svg class="a" style="left:374px;top:823px" width="9" height="8" viewBox="0 0 9 8"><path d="M0.5 0.8 Q0.5 0.5 0.8 0.5 H4 L5 1.5 H8.2 Q8.5 1.5 8.5 1.8 V7.2 Q8.5 7.5 8.2 7.5 H0.8 Q0.5 7.5 0.5 7.2 Z" fill="#fde170" stroke="#c98f2c"/><path d="M1 3.5 H8" stroke="#c98f2c" stroke-width="1"/></svg>
<div class="t" style="left:404.60px;top:819.80px;font-size:13px;line-height:13px;color:#353535;transform:scaleY(1.08);transform-origin:0 11.00px">Параметры</div>
<div class="a" style="left:568px;top:530px;width:8px;height:288px;background:#d5d5d5;border-radius:0 0 4px 4px"></div>
<div class="a" style="left:568px;top:566px;width:8px;height:253px;background:#9c9c9c;border-radius:4px 4px 4px 4px"></div>
<svg class="a" style="left:568px;top:829px" width="8" height="5" viewBox="0 0 8 5"><path d="M0.5 0.5 H7.5 L4 4.5 Z" fill="#c4c4c4"/></svg>
<div class="a" style="left:579px;top:530px;width:1px;height:317px;background:#8e8e8e"></div>
<div class="a" style="left:584px;top:530px;width:1px;height:317px;border-left:1px dashed #c4c4c4"></div>
<div class="a" style="left:590px;top:530px;width:1px;height:317px;background:#8e8e8e"></div>
<div class="a" style="left:360px;top:845px;width:182px;height:5px;background:#d5d5d5;border-radius:3px"></div>
<div class="a" style="left:360px;top:845px;width:116px;height:5px;background:#9c9c9c;border-radius:3px"></div>
<div class="a" style="left:591px;top:550px;width:579px;height:1px;background:#e3e3e3"></div>
<div class="a" style="left:591px;top:579px;width:579px;height:1px;background:#e3e3e3"></div>
<div class="a" style="left:591px;top:608px;width:579px;height:1px;background:#e3e3e3"></div>
<div class="a" style="left:591px;top:637px;width:579px;height:1px;background:#e3e3e3"></div>
<div class="a" style="left:591px;top:666px;width:579px;height:1px;background:#e3e3e3"></div>
<div class="a" style="left:591px;top:695px;width:579px;height:1px;background:#e3e3e3"></div>
<div class="a" style="left:591px;top:724px;width:579px;height:1px;background:#e3e3e3"></div>
<div class="a" style="left:591px;top:753px;width:579px;height:1px;background:#e3e3e3"></div>
<svg class="a" style="left:607px;top:524px" width="18" height="20" viewBox="0 0 18 20"><rect x="1.5" y="4.5" width="13.5" height="14" rx="2" fill="#fff" stroke="#8c8c8c" stroke-width="1.2"/></svg>
<svg class="a" style="left:698px;top:535px" width="10" height="4" viewBox="0 0 10 4"><rect x="0.5" y="0.5" width="9" height="3" rx="1.1" fill="#6d94ba" stroke="#52769c"/><path d="M1.5 1.5 H8.5" stroke="#c4d8ea" stroke-width="1"/></svg>
<div class="t" style="left:728.70px;top:530.00px;font-size:13px;line-height:13px;color:#353535;transform:scaleY(1.08);transform-origin:0 11.00px">Характеристика</div>
<div class="t" style="left:921.00px;top:530.00px;font-size:13px;line-height:13px;color:#353535;transform:scaleY(1.08);transform-origin:0 11.00px">Равно</div>
<svg class="a" style="left:607px;top:554px" width="18" height="20" viewBox="0 0 18 20"><rect x="1.5" y="4.5" width="13.5" height="14" rx="2" fill="#fff" stroke="#8c8c8c" stroke-width="1.2"/></svg>
<svg class="a" style="left:698px;top:564px" width="10" height="4" viewBox="0 0 10 4"><rect x="0.5" y="0.5" width="9" height="3" rx="1.1" fill="#6d94ba" stroke="#52769c"/><path d="M1.5 1.5 H8.5" stroke="#c4d8ea" stroke-width="1"/></svg>
<div class="t" style="left:728.70px;top:559.00px;font-size:13px;line-height:13px;color:#353535;transform:scaleY(1.08);transform-origin:0 11.00px">Назначение</div>
<div class="t" style="left:921.00px;top:559.00px;font-size:13px;line-height:13px;color:#353535;transform:scaleY(1.08);transform-origin:0 11.00px">Равно</div>
<svg class="a" style="left:607px;top:583px" width="18" height="20" viewBox="0 0 18 20"><rect x="1.5" y="4.5" width="13.5" height="14" rx="2" fill="#fff" stroke="#8c8c8c" stroke-width="1.2"/></svg>
<svg class="a" style="left:698px;top:593px" width="10" height="4" viewBox="0 0 10 4"><rect x="0.5" y="0.5" width="9" height="3" rx="1.1" fill="#6d94ba" stroke="#52769c"/><path d="M1.5 1.5 H8.5" stroke="#c4d8ea" stroke-width="1"/></svg>
<div class="t" style="left:728.70px;top:588.00px;font-size:13px;line-height:13px;color:#353535;transform:scaleY(1.08);transform-origin:0 11.00px">Сегмент номенклатуры</div>
<div class="t" style="left:921.00px;top:588.00px;font-size:13px;line-height:13px;color:#353535;transform:scaleY(1.08);transform-origin:0 11.00px">Равно</div>
<svg class="a" style="left:607px;top:612px" width="18" height="20" viewBox="0 0 18 20"><rect x="1.5" y="4.5" width="13.5" height="14" rx="2" fill="#fff" stroke="#8c8c8c" stroke-width="1.2"/></svg>
<svg class="a" style="left:698px;top:622px" width="10" height="4" viewBox="0 0 10 4"><rect x="0.5" y="0.5" width="9" height="3" rx="1.1" fill="#6d94ba" stroke="#52769c"/><path d="M1.5 1.5 H8.5" stroke="#c4d8ea" stroke-width="1"/></svg>
<div class="t" style="left:728.70px;top:617.00px;font-size:13px;line-height:13px;color:#353535;transform:scaleY(1.08);transform-origin:0 11.00px">Количество</div>
<div class="t" style="left:921.00px;top:617.00px;font-size:13px;line-height:13px;color:#353535;transform:scaleY(1.08);transform-origin:0 11.00px">Равно</div>
<svg class="a" style="left:607px;top:641px" width="18" height="20" viewBox="0 0 18 20"><rect x="1.5" y="4.5" width="13.5" height="14" rx="2" fill="#fff" stroke="#8c8c8c" stroke-width="1.2"/><path d="M4.2 10.5 L7.6 14 L15.2 4.3" fill="none" stroke="#129a48" stroke-width="2.6" stroke-linecap="round" stroke-linejoin="round"/></svg>
<div class="t" style="left:696.30px;top:646.00px;font-size:13px;line-height:13px;color:#353535;transform:scaleY(1.08);transform-origin:0 11.00px">Кроме продаж между организациями</div>
<svg class="a" style="left:607px;top:670px" width="18" height="20" viewBox="0 0 18 20"><rect x="1.5" y="4.5" width="13.5" height="14" rx="2" fill="#fff" stroke="#8c8c8c" stroke-width="1.2"/><path d="M4.2 10.5 L7.6 14 L15.2 4.3" fill="none" stroke="#129a48" stroke-width="2.6" stroke-linecap="round" stroke-linejoin="round"/></svg>
<div class="t" style="left:696.30px;top:675.00px;font-size:13px;line-height:13px;color:#353535;transform:scaleY(1.08);transform-origin:0 11.00px">Кроме комиссионных продаж</div>
<svg class="a" style="left:607px;top:699px" width="18" height="20" viewBox="0 0 18 20"><rect x="1.5" y="4.5" width="13.5" height="14" rx="2" fill="#fff" stroke="#8c8c8c" stroke-width="1.2"/></svg>
<svg class="a" style="left:698px;top:709px" width="10" height="4" viewBox="0 0 10 4"><rect x="0.5" y="0.5" width="9" height="3" rx="1.1" fill="#6d94ba" stroke="#52769c"/><path d="M1.5 1.5 H8.5" stroke="#c4d8ea" stroke-width="1"/></svg>
<div class="t" style="left:728.70px;top:704.00px;font-size:13px;line-height:13px;color:#353535;transform:scaleY(1.08);transform-origin:0 11.00px">Основной способ обесп...</div>
<div class="t" style="left:921.00px;top:704.00px;font-size:13px;line-height:13px;color:#353535;transform:scaleY(1.08);transform-origin:0 11.00px">Равно</div>
<svg class="a" style="left:607px;top:728px" width="18" height="20" viewBox="0 0 18 20"><rect x="1.5" y="4.5" width="13.5" height="14" rx="2" fill="#fff" stroke="#8c8c8c" stroke-width="1.2"/><path d="M4.2 10.5 L7.6 14 L15.2 4.3" fill="none" stroke="#129a48" stroke-width="2.6" stroke-linecap="round" stroke-linejoin="round"/></svg>
<svg class="a" style="left:698px;top:738px" width="10" height="4" viewBox="0 0 10 4"><rect x="0.5" y="0.5" width="9" height="3" rx="1.1" fill="#6d94ba" stroke="#52769c"/><path d="M1.5 1.5 H8.5" stroke="#c4d8ea" stroke-width="1"/></svg>
<div class="t" style="left:728.70px;top:733.00px;font-size:13px;line-height:13px;color:#353535;transform:scaleY(1.08);transform-origin:0 11.00px">Ценовая группа</div>
<div class="t" style="left:921.00px;top:733.00px;font-size:13px;line-height:13px;color:#353535;transform:scaleY(1.08);transform-origin:0 11.00px">Равно</div>
<div class="t" style="left:1017.50px;top:733.00px;font-size:13px;line-height:13px;color:#353535;transform:scaleY(1.08);transform-origin:0 11.00px">Бытовая техника</div>
<div class="a" style="left:591px;top:521px;width:579px;height:9px;background:#fff"></div>
<div class="a" style="left:1170px;top:530px;width:1px;height:317px;background:#8e8e8e"></div>
<div class="a" style="left:1181px;top:530px;width:1px;height:317px;background:#8e8e8e"></div>
<svg class="a" style="left:1190px;top:538px" width="8" height="5" viewBox="0 0 8 5"><path d="M0.5 4.5 H7.5 L4 0.5 Z" fill="#555"/></svg>
<div class="a" style="left:1190px;top:553px;width:8px;height:290px;background:#d5d5d5;border-radius:4px 4px 0 0"></div>
<div class="a" style="left:1190px;top:678px;width:8px;height:165px;background:#9c9c9c;border-radius:4px"></div>
<div class="a" style="left:616px;top:845px;width:530px;height:5px;background:#9c9c9c;border-radius:3px"></div>
<div class="red" style="left:396px;top:780px;width:132px;height:34px"></div>
<div class="red" style="left:595px;top:724px;width:568px;height:35px"></div>
</body></html>
